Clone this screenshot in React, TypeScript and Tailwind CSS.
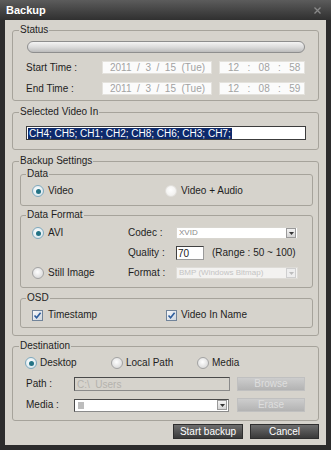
import React from "react";

const FONT = "font-['Liberation_Sans_Narrow','Arial_Narrow','Liberation_Sans',sans-serif]";

function Group({ title, className = "", children }: { title: string; className?: string; children?: React.ReactNode }) {
  return (
    <fieldset className={`border border-[#a6a39b] rounded-[3px] pl-[6px] pr-[5px] min-w-0 ${className}`}>
      <legend className="px-[1px] h-[12px] leading-[12px]">{title}</legend>
      {children}
    </fieldset>
  );
}

function Radio({ checked = false, faint = false }: { checked?: boolean; faint?: boolean }) {
  return (
    <span
      className={`w-[12px] h-[12px] rounded-full shrink-0 flex items-center justify-center border ${
        checked
          ? "border-[#7fa9bd] bg-[radial-gradient(circle_at_45%_40%,#ffffff,#cfe0e8)]"
          : faint
          ? "border-[#e2e0dc] bg-[radial-gradient(circle_at_45%_40%,#ffffff,#ecebe8)]"
          : "border-[#a3a3a3] bg-[radial-gradient(circle_at_45%_40%,#ffffff,#cfcfcf)]"
      }`}
    >
      {checked && <span className="w-[5px] h-[5px] rounded-full bg-[#237385]" />}
    </span>
  );
}

function Check() {
  return (
    <span className="w-[11px] h-[11px] shrink-0 border border-[#71849a] bg-gradient-to-br from-[#f7f8fa] to-[#cfd6de] flex items-center justify-center">
      <svg width="9" height="9" viewBox="0 0 9 9">
        <path d="M1.5 4.5 L3.6 6.8 L7.6 1.8" stroke="#2c5c9c" strokeWidth="1.6" fill="none" />
      </svg>
    </span>
  );
}

function DropBtn({ disabled = false }: { disabled?: boolean }) {
  return (
    <span
      className={`w-[10px] h-[10px] shrink-0 mr-[1px] border flex items-center justify-center ${
        disabled ? "border-[#cfcfcf] bg-[#eeeeee]" : "border-[#9a9a9a] bg-gradient-to-b from-[#f4f4f4] to-[#d4d4d4]"
      }`}
    >
      <svg width="5" height="3" viewBox="0 0 5 3">
        <path d="M0 0 L5 0 L2.5 3 Z" fill={disabled ? "#bdbdbd" : "#333"} />
      </svg>
    </span>
  );
}

function TimeField({ className, text }: { className: string; text: string }) {
  return (
    <div className={`h-[13px] bg-[#fbfbfb] border border-[#e4e2dd] text-[#a2a2a2] whitespace-pre flex items-center leading-[11px] ${className}`}>
      {text}
    </div>
  );
}

function Btn({ label, dark = false, className = "" }: { label: string; dark?: boolean; className?: string }) {
  return (
    <div
      className={`h-[14px] flex items-center justify-center leading-[12px] ${
        dark
          ? "bg-gradient-to-b from-[#6e6e6e] to-[#3a3a3a] border border-[#2e2e2e] text-white"
          : "bg-gradient-to-b from-[#cdcdcd] to-[#b3b3b3] border border-[#c0c0c0] text-[#dedede]"
      } ${className}`}
    >
      {label}
    </div>
  );
}

export default function App() {
  return (
    <div className={`w-[331px] h-[450px] bg-[#2c2c2c] flex flex-col text-[10px] leading-[12px] text-[#1e1e1e] ${FONT}`}>
      {/* title bar */}
      <div className="h-[20px] shrink-0 flex items-center justify-between pl-[6px] pr-[10px] bg-gradient-to-b from-[#5c5c5c] to-[#303030]">
        <span className="text-white font-bold text-[11px] leading-[12px]">Backup</span>
        <svg width="7" height="7" viewBox="0 0 7 7">
          <path d="M0.5 0.5 L6.5 6.5 M6.5 0.5 L0.5 6.5" stroke="#8a8a8a" strokeWidth="1.3" />
        </svg>
      </div>

      {/* body */}
      <div className="flex-1 mx-[5px] mb-[5px] bg-[#d6d3cc] pt-[4px] pl-[7px] flex flex-col">
        {/* Status */}
        <Group title="Status" className="w-[307px] pb-[5px]">
          <div className="mt-[5px] ml-[8px] w-[278px] h-[12px] rounded-full border border-[#8e8e8e] bg-gradient-to-b from-[#f4f4f4] via-[#dcdcdc] to-[#bcbcbc]" />
          <div className="mt-[8px] flex items-center h-[13px]">
            <span className="w-[83px] pl-[7px]">Start Time :</span>
            <TimeField className="w-[110px] pl-[7px]" text={"2011  /  3  /  15  (Tue)"} />
            <TimeField className="w-[86px] ml-[7px] pl-[8px]" text={"12   :   08   :   58"} />
          </div>
          <div className="mt-[8px] flex items-center h-[13px]">
            <span className="w-[83px] pl-[7px]">End Time :</span>
            <TimeField className="w-[110px] pl-[7px]" text={"2011  /  3  /  15  (Tue)"} />
            <TimeField className="w-[86px] ml-[7px] pl-[8px]" text={"12   :   08   :   59"} />
          </div>
        </Group>

        {/* Selected Video In */}
        <Group title="Selected Video In" className="w-[307px] mt-[5px] pb-[9px]">
          <div className="mt-[8px] ml-[7px] w-[280px] h-[14px] border border-[#3c3c3c] bg-white flex items-center pl-[1px]">
            <span className="bg-[#0d2a6c] text-white leading-[11px] px-[1px]">CH4; CH5; CH1; CH2; CH8; CH6; CH3; CH7;</span>
          </div>
        </Group>

        {/* Backup Settings */}
        <Group title="Backup Settings" className="w-[307px] mt-[5px] pb-[7px]">
          <Group title="Data" className="w-[293px] ml-[1px] mt-[1px] pb-[8px] !pl-[5px]">
            <div className="mt-[5px] h-[12px] flex items-center pl-[6px]">
              <div className="w-[133px] flex items-center">
                <Radio checked />
                <span className="ml-[4px]">Video</span>
              </div>
              <div className="flex items-center">
                <Radio faint />
                <span className="ml-[4px]">Video + Audio</span>
              </div>
            </div>
          </Group>

          <Group title="Data Format" className="w-[293px] ml-[1px] mt-[3px] pb-[7px] !pl-[5px]">
            <div className="mt-[5px] h-[14px] flex items-center pl-[6px]">
              <div className="w-[96px] flex items-center">
                <Radio checked />
                <span className="ml-[4px]">AVI</span>
              </div>
              <span className="w-[48px]">Codec :</span>
              <div className="w-[122px] h-[12px] bg-white border border-[#d8d6d0] flex items-center justify-between">
                <span className="pl-[2px] text-[8px] leading-[10px] text-[#8a8a8a]">XVID</span>
                <DropBtn />
              </div>
            </div>
            <div className="mt-[6px] h-[14px] flex items-center pl-[6px]">
              <div className="w-[96px]" />
              <span className="w-[48px]">Quality :</span>
              <div className="w-[28px] h-[14px] bg-white border border-[#404040] border-r-[#9a9a9a] border-b-[#9a9a9a] flex items-center pl-[1px] leading-[11px] text-[#222]">
                70
              </div>
              <span className="ml-[8px]">(Range : 50 ~ 100)</span>
            </div>
            <div className="mt-[6px] h-[14px] flex items-center pl-[6px]">
              <div className="w-[96px] flex items-center">
                <Radio />
                <span className="ml-[4px]">Still Image</span>
              </div>
              <span className="w-[48px]">Format :</span>
              <div className="w-[122px] h-[12px] bg-[#f3f2f0] border border-[#dedcd7] flex items-center justify-between">
                <span className="pl-[2px] text-[8px] leading-[10px] text-[#c4c4c4]">BMP (Windows Bitmap)</span>
                <DropBtn disabled />
              </div>
            </div>
          </Group>

          <Group title="OSD" className="w-[293px] ml-[1px] mt-[4px] pb-[6px] !pl-[5px]">
            <div className="mt-[5px] h-[12px] flex items-center pl-[6px]">
              <div className="w-[134px] flex items-center">
                <Check />
                <span className="ml-[5px]">Timestamp</span>
              </div>
              <div className="flex items-center">
                <Check />
                <span className="ml-[4px]">Video In Name</span>
              </div>
            </div>
          </Group>
        </Group>

        {/* Destination */}
        <Group title="Destination" className="w-[307px] mt-[4px] pb-[8px]">
          <div className="mt-[5px] h-[12px] flex items-center pl-[6px]">
            <div className="w-[86px] flex items-center">
              <Radio checked />
              <span className="ml-[3px]">Desktop</span>
            </div>
            <div className="w-[86px] flex items-center">
              <Radio />
              <span className="ml-[3px]">Local Path</span>
            </div>
            <div className="flex items-center">
              <Radio />
              <span className="ml-[3px]">Media</span>
            </div>
          </div>
          <div className="mt-[8px] h-[14px] flex items-center">
            <span className="w-[55px] pl-[7px]">Path :</span>
            <div className="w-[156px] h-[14px] border border-[#4a4a4a] border-r-[#8a8a8a] border-b-[#8a8a8a] bg-[#d6d3cc] flex items-center pl-[2px] leading-[11px] text-[#b4b2ac] whitespace-pre">
              {"C:\\  Users"}
            </div>
            <Btn label="Browse" className="ml-[7px] w-[68px]" />
          </div>
          <div className="mt-[7px] h-[14px] flex items-center">
            <span className="w-[55px] pl-[7px]">Media :</span>
            <div className="w-[155px] h-[13px] border border-[#4a4a4a] border-r-[#8a8a8a] border-b-[#8a8a8a] bg-white flex items-center justify-between">
              <span className="ml-[3px] w-[6px] h-[7px] bg-[#bdbdbd]" />
              <DropBtn />
            </div>
            <Btn label="Erase" className="ml-[8px] w-[68px]" />
          </div>
        </Group>

        {/* buttons */}
        <div className="mt-[3px] flex justify-end pr-[7px] gap-[7px]">
          <Btn dark label="Start backup" className="w-[70px] h-[15px]" />
          <Btn dark label="Cancel" className="w-[69px] h-[15px]" />
        </div>
      </div>
    </div>
  );
}
